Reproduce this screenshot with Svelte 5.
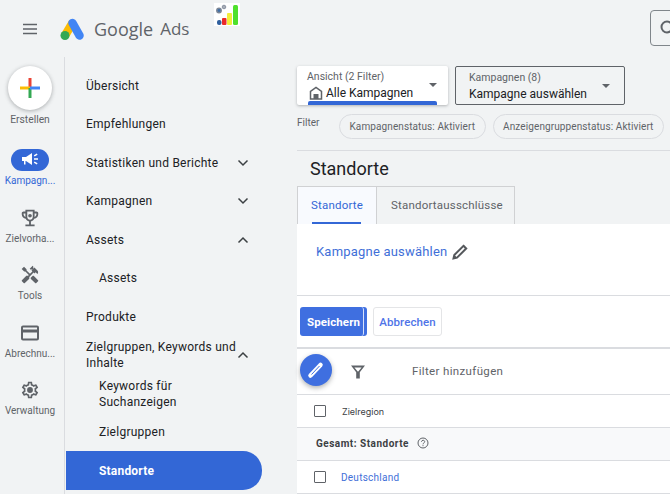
<script>
  const railItems = [
    { id: 'campaigns', label: 'Kampagn...', active: true },
    { id: 'goals', label: 'Zielvorha...' },
    { id: 'tools', label: 'Tools' },
    { id: 'billing', label: 'Abrechnu...' },
    { id: 'admin', label: 'Verwaltung' }
  ];

  const navItems = [
    { label: 'Übersicht' },
    { label: 'Empfehlungen' },
    { label: 'Statistiken und Berichte', chevron: 'down' },
    { label: 'Kampagnen', chevron: 'down' },
    { label: 'Assets', chevron: 'up' },
    { label: 'Assets', sub: true },
    { label: 'Produkte' },
    { label: 'Zielgruppen, Keywords und Inhalte', chevron: 'up' },
    { label: 'Keywords für Suchanzeigen', sub: true, narrow: true },
    { label: 'Zielgruppen', sub: true },
    { label: 'Standorte', sub: true, active: true }
  ];
</script>

<div class="page">
  <header class="topbar">
    <svg class="burger" width="18" height="12" viewBox="0 0 18 12"><path d="M2 1.500h14M2 6h14M2 10.500h14" stroke="#5f6368" stroke-width="1.500" fill="none" /></svg>
    <svg class="logo" width="26" height="24" viewBox="0 0 26 24">
      <path d="M6 18.500 13.500 6" stroke="#fbbc04" stroke-width="8.500" fill="none" />
      <path d="M13.500 6 20.500 18.500" stroke="#4285f4" stroke-width="8.500" stroke-linecap="round" fill="none" />
      <circle cx="6" cy="18.500" r="4.500" fill="#34a853" />
    </svg>
    <span class="brand">Google</span>
    <span class="brand ads">Ads</span>
    <svg class="extension" width="26" height="23" viewBox="0 0 26 23">
      <rect width="26" height="23" fill="#fff" />
      <rect x="3" y="17" width="4.500" height="5" rx="2" fill="#2f5f9e" />
      <rect x="8" y="15" width="4.500" height="7" rx="1" fill="#ea2a2a" />
      <rect x="13" y="10" width="5" height="12" rx="1" fill="#f2ee3a" />
      <rect x="19" y="2" width="5" height="20" rx="1.500" fill="#4fe02c" />
      <circle cx="5" cy="7.500" r="2.200" fill="#3f6fa8" stroke="#7d8796" stroke-width="1.500" />
      <circle cx="10" cy="4" r="1.800" fill="#a8adb6" stroke="#8a93a3" stroke-width="1" />
    </svg>
    <div class="search">
      <svg width="18" height="18" viewBox="0 0 18 18"><circle cx="8" cy="8" r="5.500" stroke="#5f6368" stroke-width="2" fill="none" /></svg>
    </div>
  </header>

  <div class="body">
    <aside class="rail">
      <button class="create" aria-label="Erstellen">
        <svg width="20" height="20" viewBox="0 0 20 20">
          <path d="M10 0v10" stroke="#ea4335" stroke-width="3" />
          <path d="M0 10h10" stroke="#fbbc04" stroke-width="3" />
          <path d="M10 10v10" stroke="#34a853" stroke-width="3" />
          <path d="M10 10h10" stroke="#4285f4" stroke-width="3" />
        </svg>
      </button>
      <div class="rail-create-label">Erstellen</div>

      {#each railItems as item}
        <div class="rail-item" class:active={item.active}>
          <div class="rail-icon">
            {#if item.id === 'campaigns'}
              <svg width="18" height="16" viewBox="0 0 18 16" fill="#fff">
                <path d="M1 5h4l6-4v12L5 9H4.500v3.500H3V9H1z" />
                <path d="M13 6.200h4v1.600h-4zM12.800 3.200l3-1.700.8 1.300-3 1.700zM12.800 10.800l3 1.700.8-1.300-3-1.700z" />
              </svg>
            {:else if item.id === 'goals'}
              <svg width="22" height="22" viewBox="0 0 24 24" fill="#5f6368">
                <path d="M19 5h-2V3H7v2H5C3.900 5 3 5.900 3 7v1c0 2.550 1.920 4.630 4.390 4.940.63 1.500 1.980 2.630 3.610 2.960V19H7v2h10v-2h-4v-3.100c1.630-.33 2.980-1.460 3.610-2.960C19.080 12.630 21 10.550 21 8V7c0-1.100-.9-2-2-2zM5 8V7h2v3.820C5.840 10.400 5 9.300 5 8zm7 6c-1.650 0-3-1.350-3-3V5h6v6c0 1.650-1.350 3-3 3zm7-6c0 1.300-.84 2.400-2 2.820V7h2v1z" />
                <circle cx="12" cy="9.500" r="2" />
              </svg>
            {:else if item.id === 'tools'}
              <svg width="20" height="20" viewBox="0 0 24 24" fill="#5f6368">
                <path d="M21.670 18.170l-5.300-5.300h-.99l-2.540 2.540v.99l5.300 5.300c.39.39 1.020.39 1.410 0l2.120-2.120c.39-.38.39-1.020 0-1.410zM17.340 10.190l1.410-1.410 2.120 2.120c1.170-1.170 1.170-3.070 0-4.240l-3.540-3.540-1.410 1.410V1.710L15.220 1l-3.540 3.540.71.71h2.830l-1.410 1.410 1.060 1.060-2.890 2.890L7.850 6.480V5.060L4.830 2.040 2 4.870l3.030 3.030h1.410l4.130 4.130-.85.85H7.600l-5.300 5.300c-.39.39-.39 1.020 0 1.410l2.120 2.120c.39.39 1.020.39 1.410 0l5.300-5.300v-2.120l5.150-5.150 1.060 1.050z" />
              </svg>
            {:else if item.id === 'billing'}
              <svg width="18" height="16" viewBox="0 0 18 16" fill="none" stroke="#5f6368" stroke-width="2">
                <rect x="1" y="1.500" width="16" height="13" rx="1" />
                <path d="M1 6h16" stroke-width="3" />
              </svg>
            {:else}
              <svg width="20" height="20" viewBox="0 0 24 24" fill="#5f6368">
                <path d="M19.430 12.980c.04-.32.07-.64.07-.98 0-.34-.03-.66-.07-.98l2.110-1.650c.19-.15.24-.42.12-.64l-2-3.460c-.09-.16-.26-.25-.44-.25-.06 0-.12.01-.17.03l-2.490 1c-.52-.4-1.080-.73-1.690-.98l-.38-2.650C14.460 2.180 14.250 2 14 2h-4c-.25 0-.46.18-.49.42l-.38 2.650c-.61.25-1.170.59-1.690.98l-2.490-1c-.06-.02-.12-.03-.18-.03-.17 0-.34.09-.43.25l-2 3.460c-.13.22-.07.49.12.64l2.110 1.650c-.04.32-.07.65-.07.98 0 .33.03.66.07.98l-2.110 1.650c-.19.15-.24.42-.12.64l2 3.460c.09.16.26.25.44.25.06 0 .12-.01.17-.03l2.490-1c.52.4 1.080.73 1.690.98l.38 2.650c.03.24.24.42.49.42h4c.25 0 .46-.18.49-.42l.38-2.650c.61-.25 1.170-.59 1.690-.98l2.490 1c.06.02.12.03.18.03.17 0 .34-.09.43-.25l2-3.460c.12-.22.07-.49-.12-.64l-2.110-1.650zm-1.980-1.710c.04.31.05.52.05.73 0 .21-.02.43-.05.73l-.14 1.130.89.7 1.080.84-.7 1.210-1.270-.51-1.040-.42-.9.68c-.43.32-.84.56-1.250.73l-1.060.43-.16 1.130-.2 1.350h-1.400l-.19-1.350-.16-1.130-1.060-.43c-.43-.18-.83-.41-1.230-.71l-.91-.7-1.060.43-1.270.51-.7-1.210 1.080-.84.89-.7-.14-1.130c-.03-.31-.05-.54-.05-.74s.02-.43.05-.73l.14-1.130-.89-.7-1.080-.84.7-1.210 1.270.51 1.040.42.9-.68c.43-.32.84-.56 1.250-.73l1.060-.43.16-1.130.2-1.350h1.390l.19 1.350.16 1.130 1.060.43c.43.18.83.41 1.230.71l.91.7 1.060-.43 1.270-.51.7 1.210-1.070.85-.89.7.14 1.130zM12 8.500a3.500 3.500 0 1 0 0 7 3.500 3.500 0 0 0 0-7z" />
              </svg>
            {/if}
          </div>
          <div class="rail-label">{item.label}</div>
        </div>
      {/each}
    </aside>

    <nav class="nav">
      {#each navItems as item}
        <div class="nav-item" class:sub={item.sub} class:narrow={item.narrow} class:active={item.active}>
          <span>{item.label}</span>
          {#if item.chevron}
            <svg class="chevron" width="12" height="8" viewBox="0 0 12 8" fill="none" stroke="#3c4043" stroke-width="1.500">
              {#if item.chevron === 'down'}
                <path d="M1.500 1.500 6 6l4.500-4.500" />
              {:else}
                <path d="M1.500 6.500 6 2l4.500 4.500" />
              {/if}
            </svg>
          {/if}
        </div>
      {/each}
    </nav>

    <main class="main">
      <div class="selectors">
        <div class="selector view">
          <div class="selector-text">
            <div class="selector-label">Ansicht (2 Filter)</div>
            <div class="selector-value">
              <svg class="home" width="14" height="14" viewBox="0 0 14 14" fill="none" stroke="#5f6368" stroke-width="1.500">
                <path d="M1.500 13V5.500L7 1.500l5.500 4V13z" />
                <path d="M4.500 13V8h5v5" fill="#5f6368" stroke="none" />
              </svg>
              Alle Kampagnen
            </div>
          </div>
          <span class="caret"></span>
          <span class="view-bar"></span>
        </div>
        <div class="selector campaign">
          <div class="selector-text">
            <div class="selector-label">Kampagnen (8)</div>
            <div class="selector-value">Kampagne auswählen</div>
          </div>
          <span class="caret"></span>
        </div>
      </div>

      <div class="filters">
        <span class="filter-label">Filter</span>
        <span class="chip">Kampagnenstatus: Aktiviert</span>
        <span class="chip">Anzeigengruppenstatus: Aktiviert</span>
      </div>

      <h1 class="title">Standorte</h1>

      <div class="tabs">
        <div class="tab selected">Standorte<span class="tab-line"></span></div>
        <div class="tab other">Standortausschlüsse</div>
      </div>

      <section class="panel">
        <div class="pick">
          <span class="pick-link">Kampagne auswählen</span>
          <svg width="16" height="16" viewBox="0 0 16 16" fill="none" stroke="#55585c">
            <path d="M11.500 1.800 14.200 4.500 5 13.700 1.500 14.500 2.300 11z" stroke-width="2" />
            <path d="M2.500 11 5 13.500 1.500 14.500z" fill="#55585c" stroke="none" />
          </svg>
        </div>

        <div class="actions">
          <button class="save">Speichern</button>
          <button class="cancel">Abbrechen</button>
        </div>

        <div class="toolbar">
          <span class="fab">
            <svg width="18" height="18" viewBox="0 0 18 18" fill="none">
              <path d="M3.500 14.500 13.500 4" stroke="#fff" stroke-width="4.500" stroke-linecap="round" />
              <path d="M4.500 13.500 12.500 5" stroke="#3f6fe0" stroke-width="1" />
            </svg>
          </span>
          <svg class="funnel" width="14" height="14" viewBox="0 0 14 14" fill="#5f6368">
            <path d="M0 .5h14L8.800 7.200V13.500H5.200V7.200zM3.400 2.500 6.700 6.600h.6l3.300-4.100z" fill-rule="evenodd" />
          </svg>
          <span class="add-filter">Filter hinzufügen</span>
        </div>

        <div class="row head">
          <span class="check"></span>
          <span class="region">Zielregion</span>
        </div>
        <div class="row total">
          <span>Gesamt: Standorte</span>
          <svg width="12" height="12" viewBox="0 0 12 12" fill="none" stroke="#5f6368"><circle cx="6" cy="6" r="5" /><path d="M4.500 4.800c0-2 3.200-2 3.200-.1 0 1.200-1.700 1.200-1.700 2.600M6 8.200v1" /></svg>
        </div>
        <div class="row">
          <span class="check"></span>
          <span class="country">Deutschland</span>
        </div>
      </section>
    </main>
  </div>
</div>

<style>
  :global(body) {
    margin: 0;
    background: #f1f3f4;
  }

  .page {
    width: 670px;
    height: 494px;
    overflow: hidden;
    background: #f1f3f4;
    font-family: Roboto, "Liberation Sans", sans-serif;
    color: #202124;
  }

  .topbar {
    height: 57px;
    display: flex;
    align-items: center;
    position: relative;
  }

  .burger {
    margin-left: 21px;
  }

  .logo {
    margin-left: 20px;
    margin-top: 1px;
  }

  .brand {
    font-family: "Open Sans", sans-serif;
    font-size: 18px;
    color: #5f6368;
    margin-left: 9px;
  }

  .ads {
    margin-left: 7px;
    font-size: 17px;
  }

  .extension {
    position: absolute;
    left: 214px;
    top: 3px;
  }

  .search {
    margin-left: auto;
    margin-right: -20px;
    width: 40px;
    height: 36px;
    border: 1px solid #80868b;
    border-radius: 4px;
    display: flex;
    align-items: center;
    padding-left: 8px;
    box-sizing: border-box;
    margin-top: -1px;
  }

  .body {
    display: flex;
    height: 437px;
  }

  .rail {
    width: 65px;
    flex: none;
    border-right: 1px solid #dadce0;
    padding-right: 4px;
    box-sizing: border-box;
    margin-right: 1px;
    display: flex;
    flex-direction: column;
    align-items: center;
  }

  .create {
    width: 44px;
    height: 44px;
    border-radius: 50%;
    border: none;
    background: #fff;
    box-shadow: 0 1px 4px rgba(60, 64, 67, 0.4);
    margin-top: 9px;
    padding: 0;
    display: flex;
    align-items: center;
    justify-content: center;
    flex: none;
  }

  .rail-create-label {
    font-size: 10.300px;
    color: #5f6368;
    margin-top: 3px;
    line-height: 13px;
    margin-bottom: 23px;
  }

  .rail-item {
    height: 57.600px;
    flex: none;
    text-align: center;
    white-space: nowrap;
  }

  .rail-icon {
    width: 38px;
    height: 22px;
    margin: 0 auto;
    border-radius: 11px;
    display: flex;
    align-items: center;
    justify-content: center;
  }

  .rail-label {
    font-size: 10px;
    line-height: 13px;
    margin-top: 3px;
    color: #5f6368;
  }

  .rail-item.active .rail-icon {
    background: #3367d6;
  }

  .rail-item.active .rail-label {
    color: #3367d6;
  }

  .nav {
    width: 196px;
    flex: none;
    margin-top: 9px;
  }

  .nav-item {
    height: 38.500px;
    display: flex;
    align-items: center;
    justify-content: space-between;
    box-sizing: border-box;
    padding: 1px 13px 0 20px;
    font-size: 12px;
    letter-spacing: 0.25px;
    line-height: 16px;
    color: #202124;
  }

  .nav-item.sub {
    padding-left: 33px;
  }

  .nav-item.narrow span {
    max-width: 110px;
  }

  .nav-item.active {
    background: #3367d6;
    color: #fff;
    border-radius: 0 19px 19px 0;
    font-weight: 700;
    letter-spacing: 0.2px;
  }

  .chevron {
    flex: none;
    margin-left: -6px;
  }

  .main {
    margin-left: 35px;
    flex: 1;
    min-width: 0;
    display: flex;
    flex-direction: column;
  }

  .selectors {
    display: flex;
    gap: 7px;
    margin-top: 9px;
  }

  .selector {
    height: 39px;
    box-sizing: border-box;
    display: flex;
    justify-content: space-between;
    border-radius: 2px;
    position: relative;
  }

  .view {
    width: 151px;
    background: #fff;
    box-shadow: 0 1px 3px rgba(60, 64, 67, 0.35);
    padding: 4px 11px 0 10px;
  }

  .campaign {
    width: 170px;
    border: 1px solid #5f6368;
    padding: 4px 14px 0 13px;
  }

  .selector-label {
    font-size: 10.500px;
    line-height: 13px;
    color: #5f6368;
  }

  .selector-value {
    font-size: 12px;
    line-height: 16px;
    margin-top: 2px;
    display: flex;
    align-items: center;
    gap: 3px;
    color: #202124;
  }

  .home {
    margin-left: 2px;
  }

  .caret {
    width: 0;
    height: 0;
    border-left: 4px solid transparent;
    border-right: 4px solid transparent;
    border-top: 4px solid #5f6368;
    margin-top: 13px;
  }

  .view-bar {
    position: absolute;
    left: 11px;
    right: 11px;
    bottom: 0;
    height: 4px;
    border-radius: 2px 2px 0 0;
    background: #3367d6;
  }

  .filters {
    display: flex;
    align-items: flex-start;
    height: 36px;
    margin-top: 9px;
    border-bottom: 1px solid #dadce0;
    white-space: nowrap;
  }

  .filter-label {
    font-size: 10px;
    color: #5f6368;
    margin-top: 3px;
    width: 42px;
    flex: none;
  }

  .chip {
    height: 25px;
    box-sizing: border-box;
    border: 1px solid #dadce0;
    border-radius: 13px;
    font-size: 10px;
    letter-spacing: 0.1px;
    line-height: 23px;
    color: #5f6368;
    padding: 0 9.500px;
    margin-right: 7px;
  }

  .title {
    margin: 0;
    font-size: 18px;
    font-weight: 400;
    line-height: 35px;
    padding-left: 13px;
    color: #202124;
  }

  .tabs {
    display: flex;
    height: 38px;
  }

  .tab {
    box-sizing: border-box;
    border: 1px solid #d0d1d3;
    border-bottom: none;
    padding: 0 13px;
    font-size: 11.500px;
    letter-spacing: 0.2px;
    line-height: 37px;
    color: #5f6368;
    position: relative;
  }

  .tab.other {
    border-left: none;
    width: 138px;
    padding-left: 14px;
  }

  .tab.selected {
    width: 80px;
    background: #f8fafe;
    color: #3367d6;
  }

  .tab-line {
    position: absolute;
    left: 14px;
    width: 49px;
    bottom: 0;
    height: 2px;
    background: #3367d6;
  }

  .panel {
    flex: 1;
    background: #fff;
  }

  .pick {
    height: 72px;
    box-sizing: border-box;
    padding: 20px 0 0 19px;
    display: flex;
    align-items: flex-start;
    gap: 5px;
    border-bottom: 1px solid #dadce0;
  }

  .pick-link {
    font-size: 13px;
    letter-spacing: 0.2px;
    line-height: 16px;
    color: #3f6fd8;
  }

  .actions {
    height: 53px;
    box-sizing: border-box;
    padding: 11px 0 0 3px;
    display: flex;
    align-items: flex-start;
    gap: 9px;
    border-bottom: 2px solid #dadce0;
  }

  .save,
  .cancel {
    height: 29px;
    padding: 0;
    border-radius: 3px;
    font-family: inherit;
    font-size: 11.500px;
    letter-spacing: 0.1px;
  }

  .save {
    width: 64px;
    border: none;
    border-right: 1px solid #d7e2fb;
    background: #3f6fe0;
    box-shadow: 3px 0 0 #3f6fe0;
    color: #fff;
    font-weight: 700;
    text-align: left;
    padding-left: 7px;
  }

  .cancel {
    width: 69px;
    border: 1px solid #e4e5e7;
    background: #fff;
    color: #4f74e8;
    font-weight: 500;
  }

  .toolbar {
    height: 45px;
    display: flex;
    align-items: center;
    border-bottom: 1px solid #dadce0;
    padding-left: 3px;
  }

  .fab {
    width: 32px;
    height: 32px;
    border-radius: 50%;
    background: #3f6fe0;
    box-shadow: 0 2px 5px rgba(60, 64, 67, 0.4);
    display: flex;
    align-items: center;
    justify-content: center;
    margin-top: -4px;
  }

  .funnel {
    margin-left: 19px;
  }

  .add-filter {
    margin-left: 47px;
    margin-top: -2px;
    font-size: 11.500px;
    letter-spacing: 0.35px;
    color: #5f6368;
  }

  .row {
    height: 33px;
    box-sizing: border-box;
    display: flex;
    align-items: center;
    border-bottom: 1px solid #dadce0;
    padding-left: 17px;
  }

  .check {
    width: 10px;
    height: 10px;
    border: 1px solid #5f6368;
    border-radius: 1px;
    flex: none;
  }

  .region {
    margin-left: 16px;
    font-family: Inter, sans-serif;
    font-size: 9px;
    color: #3c4043;
  }

  .total {
    background: #f8f9fa;
    padding-left: 19px;
    padding-bottom: 2px;
    gap: 8px;
    font-size: 10px;
    font-weight: 700;
    letter-spacing: 0.5px;
    color: #3c4043;
  }

  .country {
    margin-left: 15px;
    font-size: 10px;
    letter-spacing: 0.25px;
    color: #3f6fd8;
  }
</style>
